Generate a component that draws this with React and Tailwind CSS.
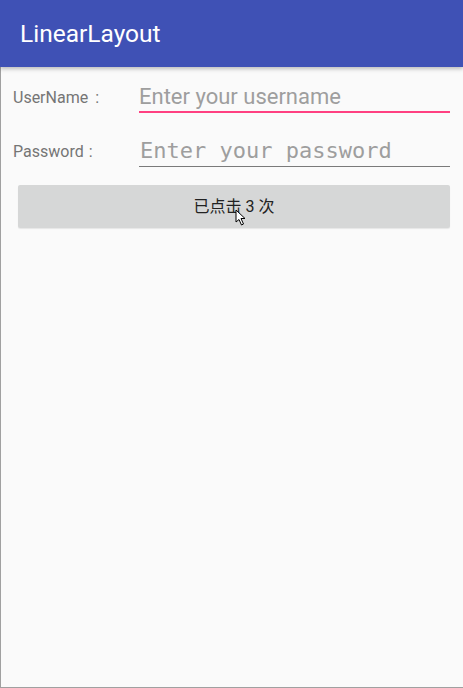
import React from "react";

const Cursor = () => (
  <svg
    width="12"
    height="18"
    viewBox="0 0 12 18"
    className="absolute left-[235px] top-[209px]"
  >
    <path
      d="M1 1 L1 13 L4 10.5 L6.5 16 L8.5 15 L6 9.5 L10 9.5 Z"
      fill="#ffffff"
      stroke="#000000"
      strokeWidth="1"
      strokeLinejoin="round"
    />
  </svg>
);

const App = () => {
  return (
    <div className="relative w-[463px] h-[688px] flex flex-col bg-[#fafafa] font-['Roboto','Noto_Sans',sans-serif] overflow-hidden">
      {/* app bar */}
      <div className="h-[67px] shrink-0 bg-[#3f51b5] flex items-center pl-[20px] pt-[1px] shadow-[0_2px_4px_rgba(0,0,0,0.25)] z-10">
        <span className="text-white text-[24.5px] leading-none">LinearLayout</span>
      </div>

      <div className="flex-1 flex flex-col border-l border-b border-[#a0a0a0]">
        {/* username row */}
        <div className="flex items-center mt-[14px] h-[32px]">
          <label className="w-[138px] pl-[12px] text-[16px] text-[#757575] pt-[2px]">
            UserName <span className="ml-[3px]">:</span>
          </label>
          <div className="flex-1 mr-[13px] h-[32px] border-b-2 border-[#ff4081] flex items-center">
            <span className="text-[22px] text-[#9e9e9e] leading-none pt-[1px]">
              Enter your username
            </span>
          </div>
        </div>

        {/* password row */}
        <div className="flex items-center mt-[22px] h-[32px]">
          <label className="w-[138px] pl-[12px] text-[16px] text-[#757575] pt-[2px]">
            Password <span className="ml-[1px]">:</span>
          </label>
          <div className="flex-1 mr-[13px] h-[32px] border-b border-[#7a7a7a] flex items-center">
            <span className="text-[22px] text-[#9e9e9e] leading-none font-['DejaVu_Sans_Mono','Liberation_Mono',monospace] pl-[1px]">
              Enter your password
            </span>
          </div>
        </div>

        {/* button */}
        <div className="ml-[17px] mr-[13px] mt-[18px] h-[43px] rounded-[2px] bg-[#d6d7d7] shadow-[0_1px_1px_rgba(0,0,0,0.08)] flex items-center justify-center">
          <span className="text-[16px] text-[#222222] font-['Roboto','Noto_Sans_CJK_SC',sans-serif]">
            已点击 3 次
          </span>
        </div>
      </div>

      <Cursor />
    </div>
  );
};

export default App;
